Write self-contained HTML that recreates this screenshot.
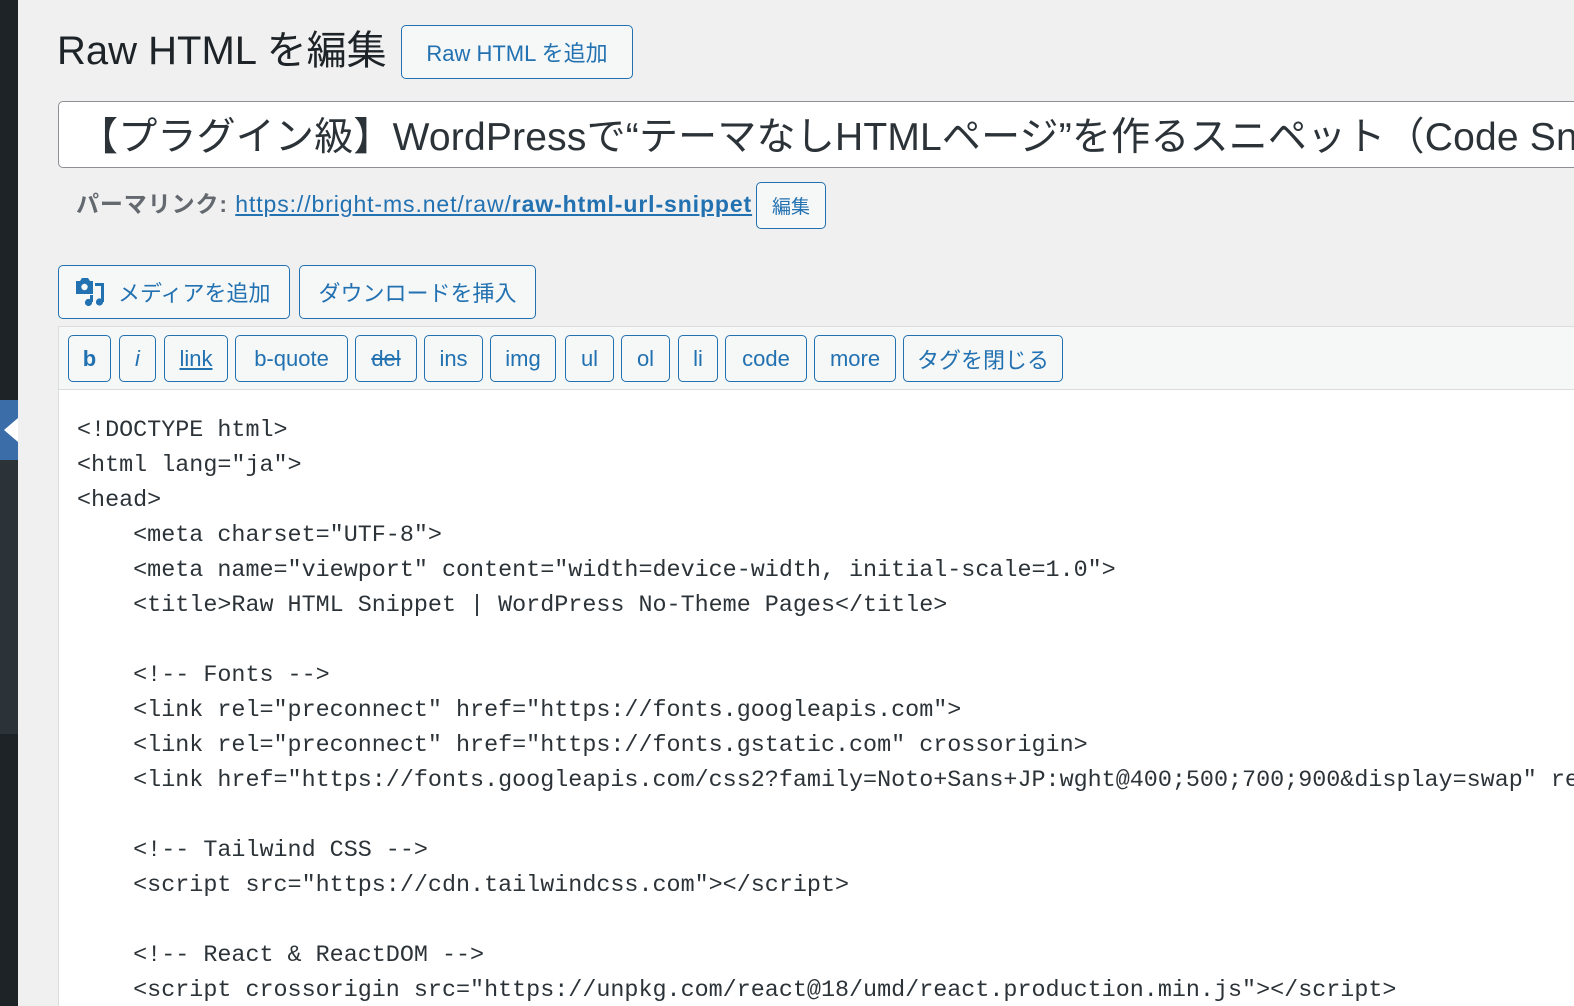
<!DOCTYPE html>
<html><head><meta charset="utf-8">
<style>
*{margin:0;padding:0;box-sizing:border-box}
html,body{width:1574px;height:1006px;overflow:hidden}
body{background:#f0f0f1;font-family:"Liberation Sans","Noto Sans CJK JP",sans-serif;position:relative;color:#1d2327}
.abs{position:absolute}
.btn{position:absolute;border:1px solid #2271b1;border-radius:5px;background:#f6f7f7;color:#2271b1;display:flex;align-items:center;justify-content:center;white-space:nowrap}
pre{font-family:"Liberation Mono","Noto Sans CJK JP",monospace;font-size:23.4px;line-height:35px;color:#2c3338;white-space:pre}
#wrap{position:absolute;left:0;top:0;width:1574px;height:1006px;overflow:hidden}
</style></head><body><div id="wrap">
<div class="abs" style="left:0;top:0;width:18px;height:1006px;background:#1d2327"></div>
<div class="abs" style="left:0;top:400px;width:18px;height:60px;background:#3b6ea8"></div>
<div class="abs" style="left:4px;top:418px;width:0;height:0;border-top:12px solid transparent;border-bottom:12px solid transparent;border-right:14px solid #fff"></div>
<div class="abs" style="left:0;top:460px;width:18px;height:274px;background:#2c3338"></div>

<div class="abs" style="left:57px;top:26px;font-size:40px;line-height:50px;color:#1d2327">Raw HTML を編集</div>
<div class="btn" style="left:401px;top:25px;width:232px;height:54px;font-size:22px">Raw HTML を追加</div>

<div class="abs" style="left:58px;top:101px;width:1530px;height:67px;background:#fff;border:1px solid #8c8f94;border-radius:5px;overflow:hidden">
<div style="position:absolute;left:20px;top:12px;font-size:39px;line-height:48px;white-space:nowrap;color:#2c3338;letter-spacing:0.2px">【プラグイン級】WordPressで“テーマなしHTMLページ”を作るスニペット（Code Snippets）</div></div>

<div class="abs" style="left:76px;top:189px;font-size:23px;line-height:30px;white-space:nowrap;letter-spacing:0.9px"><b style="color:#646970">パーマリンク:</b> <span style="color:#2271b1;text-decoration:underline">https://bright-ms.net/raw/<b>raw-html-url-snippet</b></span></div>
<div class="btn" style="left:756px;top:182px;width:70px;height:47px;font-size:19px">編集</div>

<div class="btn" style="left:58px;top:265px;width:232px;height:54px;font-size:22px;justify-content:flex-start;padding-left:15px">
<svg width="32" height="30" viewBox="0 0 32 30" style="margin-right:12px"><path d="M2 4h4l2-3h6l2 3h3v13H2z" fill="#2271b1"/><circle cx="10.5" cy="10" r="3.2" fill="#f6f7f7"/><rect x="21" y="6" width="9" height="3" fill="#2271b1"/><rect x="27" y="6" width="3" height="19" fill="#2271b1"/><circle cx="25.5" cy="25" r="3.6" fill="#2271b1"/><rect x="16" y="18" width="3" height="7" fill="#2271b1"/><circle cx="14.5" cy="25.5" r="3.6" fill="#2271b1"/></svg>メディアを追加</div>
<div class="btn" style="left:299px;top:265px;width:237px;height:54px;font-size:22px">ダウンロードを挿入</div>

<div class="abs" style="left:58px;top:326px;width:1530px;height:690px;background:#fff;border:1px solid #dcdcde"></div>
<div class="abs" style="left:59px;top:327px;width:1530px;height:63px;background:#f6f7f7;border-bottom:1px solid #dcdcde"></div>

<div class="btn" style="left:68px;top:335px;width:43px;height:47px;font-size:22px;font-weight:bold">b</div>
<div class="btn" style="left:119px;top:335px;width:37px;height:47px;font-size:22px;font-style:italic">i</div>
<div class="btn" style="left:164px;top:335px;width:64px;height:47px;font-size:22px;text-decoration:underline">link</div>
<div class="btn" style="left:235px;top:335px;width:113px;height:47px;font-size:22px">b-quote</div>
<div class="btn" style="left:355px;top:335px;width:62px;height:47px;font-size:22px;text-decoration:line-through">del</div>
<div class="btn" style="left:424px;top:335px;width:59px;height:47px;font-size:22px">ins</div>
<div class="btn" style="left:490px;top:335px;width:66px;height:47px;font-size:22px">img</div>
<div class="btn" style="left:565px;top:335px;width:49px;height:47px;font-size:22px">ul</div>
<div class="btn" style="left:621px;top:335px;width:49px;height:47px;font-size:22px">ol</div>
<div class="btn" style="left:678px;top:335px;width:40px;height:47px;font-size:22px">li</div>
<div class="btn" style="left:725px;top:335px;width:82px;height:47px;font-size:22px">code</div>
<div class="btn" style="left:814px;top:335px;width:82px;height:47px;font-size:22px">more</div>
<div class="btn" style="left:903px;top:335px;width:160px;height:47px;font-size:22px">タグを閉じる</div>

<pre class="abs" style="left:77px;top:414px">&lt;!DOCTYPE html&gt;
&lt;html lang="ja"&gt;
&lt;head&gt;
    &lt;meta charset="UTF-8"&gt;
    &lt;meta name="viewport" content="width=device-width, initial-scale=1.0"&gt;
    &lt;title&gt;Raw HTML Snippet | WordPress No-Theme Pages&lt;/title&gt;

    &lt;!-- Fonts --&gt;
    &lt;link rel="preconnect" href="https://fonts.googleapis.com"&gt;
    &lt;link rel="preconnect" href="https://fonts.gstatic.com" crossorigin&gt;
    &lt;link href="https://fonts.googleapis.com/css2?family=Noto+Sans+JP:wght@400;500;700;900&amp;display=swap" rel="stylesheet"&gt;

    &lt;!-- Tailwind CSS --&gt;
    &lt;script src="https://cdn.tailwindcss.com"&gt;&lt;/script&gt;

    &lt;!-- React &amp; ReactDOM --&gt;
    &lt;script crossorigin src="https://unpkg.com/react@18/umd/react.production.min.js"&gt;&lt;/script&gt;</pre>
</div></body></html>
